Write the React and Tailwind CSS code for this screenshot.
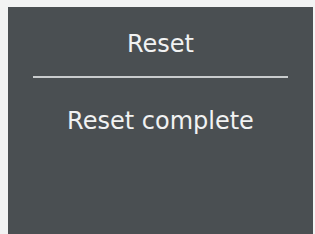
import React from 'react';

const App = () => {
  return (
    <div className="w-[315px] h-[234px] bg-[#f2f3f3] pt-[7px] pl-[8px] pr-[2px] overflow-hidden">
      <div
        className="h-full bg-[#4a4f52] flex flex-col items-center text-[#f1f2f2]"
        style={{ fontFamily: '"DejaVu Sans", sans-serif' }}
      >
        <p className="mt-[23px] text-[24px] leading-[28px]">Reset</p>
        <div className="mt-[18px] w-[255px] h-[2px] bg-[#c9cccd]" />
        <p className="mt-[29px] text-[24px] leading-[28px]">Reset complete</p>
      </div>
    </div>
  );
};

export default App;
